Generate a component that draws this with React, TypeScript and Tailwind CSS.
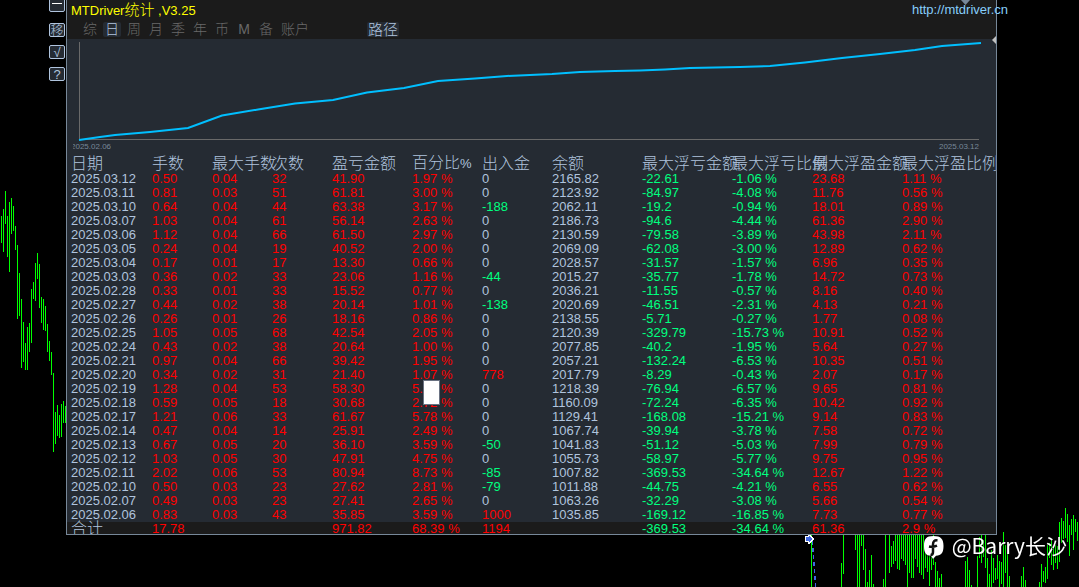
import clsx from "clsx";

type Bar = [x: number, top: number, bottom: number];

const bars: Bar[] = [
	[1, 216, 243], [3, 209, 252], [5, 191, 224], [7, 216, 257], [9, 202, 272],
	[11, 198, 234], [13, 206, 231], [15, 226, 250], [17, 245, 319], [19, 273, 316],
	[21, 299, 368], [23, 322, 362], [25, 343, 370], [27, 327, 370], [29, 323, 352],
	[31, 289, 343], [33, 282, 299], [35, 263, 301], [37, 253, 279], [39, 264, 308],
	[41, 297, 323], [43, 299, 330], [45, 306, 331], [47, 324, 352], [49, 341, 361],
	[51, 352, 375], [53, 373, 452], [55, 412, 444], [57, 405, 436], [59, 415, 438],
	[61, 404, 437], [63, 401, 423], [65, 406, 423],
	[811, 535, 587], [841, 563, 587], [843, 535, 574], [855, 535, 550], [857, 535, 587],
	[859, 535, 587], [861, 535, 546], [863, 535, 570], [865, 549, 587], [867, 582, 587],
	[869, 570, 587], [871, 555, 587], [873, 584, 587], [883, 579, 587], [885, 535, 587],
	[889, 535, 573], [891, 546, 567], [893, 541, 564], [895, 535, 561], [897, 535, 569],
	[899, 535, 570], [901, 535, 559], [903, 535, 561], [905, 535, 565], [907, 535, 587],
	[909, 535, 573], [911, 535, 578], [913, 535, 578], [915, 535, 559], [917, 535, 567],
	[919, 535, 573], [921, 535, 575], [923, 535, 579], [925, 540, 568], [927, 548, 572],
	[929, 550, 586], [931, 550, 570], [933, 535, 565], [935, 562, 587], [937, 571, 587],
	[939, 578, 587], [941, 574, 587], [965, 561, 587], [967, 557, 587], [969, 570, 587],
	[971, 585, 587], [977, 556, 587], [979, 537, 558], [981, 535, 563], [983, 540, 557],
	[985, 535, 568], [987, 558, 587], [989, 574, 587], [991, 550, 587], [993, 558, 583],
	[995, 568, 580], [997, 555, 579], [999, 561, 587], [1001, 562, 584], [1003, 532, 587],
	[1005, 545, 573], [1007, 553, 587], [1009, 576, 587], [1021, 576, 587], [1023, 567, 587],
	[1025, 580, 587], [1039, 582, 587], [1041, 564, 587], [1043, 571, 582], [1045, 567, 583],
	[1047, 545, 579], [1049, 543, 558], [1051, 540, 565], [1053, 548, 570], [1055, 545, 563],
	[1057, 546, 569], [1059, 522, 562], [1061, 518, 543], [1063, 521, 539], [1065, 508, 538],
	[1067, 514, 542], [1069, 525, 556], [1071, 519, 535], [1073, 515, 550], [1075, 519, 532],
	[1077, 522, 541],
];

const columns = [
	{ label: "日期", width: "w-[81px]" },
	{ label: "手数", width: "w-[60px]" },
	{ label: "最大手数", width: "w-[60px]" },
	{ label: "次数", width: "w-[60px]" },
	{ label: "盈亏金额", width: "w-[80px]" },
	{ label: "百分比%", width: "w-[70px]" },
	{ label: "出入金", width: "w-[70px]" },
	{ label: "余额", width: "w-[90px]" },
	{ label: "最大浮亏金额", width: "w-[90px]" },
	{ label: "最大浮亏比例", width: "w-[80px]" },
	{ label: "最大浮盈金额", width: "w-[90px]" },
	{ label: "最大浮盈比例", width: "w-auto" },
];

const rows = [
	["2025.03.12", "0.50", "0.04", "32", "41.90", "1.97 %", "0", "2165.82", "-22.61", "-1.06 %", "23.68", "1.11 %"],
	["2025.03.11", "0.81", "0.03", "51", "61.81", "3.00 %", "0", "2123.92", "-84.97", "-4.08 %", "11.76", "0.56 %"],
	["2025.03.10", "0.64", "0.04", "44", "63.38", "3.17 %", "-188", "2062.11", "-19.2", "-0.94 %", "18.01", "0.89 %"],
	["2025.03.07", "1.03", "0.04", "61", "56.14", "2.63 %", "0", "2186.73", "-94.6", "-4.44 %", "61.36", "2.90 %"],
	["2025.03.06", "1.12", "0.04", "66", "61.50", "2.97 %", "0", "2130.59", "-79.58", "-3.89 %", "43.98", "2.11 %"],
	["2025.03.05", "0.24", "0.04", "19", "40.52", "2.00 %", "0", "2069.09", "-62.08", "-3.00 %", "12.89", "0.62 %"],
	["2025.03.04", "0.17", "0.01", "17", "13.30", "0.66 %", "0", "2028.57", "-31.57", "-1.57 %", "6.96", "0.35 %"],
	["2025.03.03", "0.36", "0.02", "33", "23.06", "1.16 %", "-44", "2015.27", "-35.77", "-1.78 %", "14.72", "0.73 %"],
	["2025.02.28", "0.33", "0.01", "33", "15.52", "0.77 %", "0", "2036.21", "-11.55", "-0.57 %", "8.16", "0.40 %"],
	["2025.02.27", "0.44", "0.02", "38", "20.14", "1.01 %", "-138", "2020.69", "-46.51", "-2.31 %", "4.13", "0.21 %"],
	["2025.02.26", "0.26", "0.01", "26", "18.16", "0.86 %", "0", "2138.55", "-5.71", "-0.27 %", "1.77", "0.08 %"],
	["2025.02.25", "1.05", "0.05", "68", "42.54", "2.05 %", "0", "2120.39", "-329.79", "-15.73 %", "10.91", "0.52 %"],
	["2025.02.24", "0.43", "0.02", "38", "20.64", "1.00 %", "0", "2077.85", "-40.2", "-1.95 %", "5.64", "0.27 %"],
	["2025.02.21", "0.97", "0.04", "66", "39.42", "1.95 %", "0", "2057.21", "-132.24", "-6.53 %", "10.35", "0.51 %"],
	["2025.02.20", "0.34", "0.02", "31", "21.40", "1.07 %", "778", "2017.79", "-8.29", "-0.43 %", "2.07", "0.17 %"],
	["2025.02.19", "1.28", "0.04", "53", "58.30", "5.03 %", "0", "1218.39", "-76.94", "-6.57 %", "9.65", "0.81 %"],
	["2025.02.18", "0.59", "0.05", "18", "30.68", "2.72 %", "0", "1160.09", "-72.24", "-6.35 %", "10.42", "0.92 %"],
	["2025.02.17", "1.21", "0.06", "33", "61.67", "5.78 %", "0", "1129.41", "-168.08", "-15.21 %", "9.14", "0.83 %"],
	["2025.02.14", "0.47", "0.04", "14", "25.91", "2.49 %", "0", "1067.74", "-39.94", "-3.78 %", "7.58", "0.72 %"],
	["2025.02.13", "0.67", "0.05", "20", "36.10", "3.59 %", "-50", "1041.83", "-51.12", "-5.03 %", "7.99", "0.79 %"],
	["2025.02.12", "1.03", "0.05", "30", "47.91", "4.75 %", "0", "1055.73", "-58.97", "-5.77 %", "9.75", "0.95 %"],
	["2025.02.11", "2.02", "0.06", "53", "80.94", "8.73 %", "-85", "1007.82", "-369.53", "-34.64 %", "12.67", "1.22 %"],
	["2025.02.10", "0.50", "0.03", "23", "27.62", "2.81 %", "-79", "1011.88", "-44.75", "-4.21 %", "6.55", "0.62 %"],
	["2025.02.07", "0.49", "0.03", "23", "27.41", "2.65 %", "0", "1063.26", "-32.29", "-3.08 %", "5.66", "0.54 %"],
	["2025.02.06", "0.83", "0.03", "43", "35.85", "3.59 %", "1000", "1035.85", "-169.12", "-16.85 %", "7.73", "0.77 %"],
];

const totals = ["合计", "17.78", "", "", "971.82", "68.39 %", "1194", "", "-369.53", "-34.64 %", "61.36", "2.9 %"];

const periods = ["综", "日", "周", "月", "季", "年", "币", "M", "备"];

const cellColor = (value: string, column: number) => {
	if (column === 0 || column === 7 || value === "0") return "text-[#b0c4de]";
	return value.startsWith("-") ? "text-[#00ff7f]" : "text-[#ff0000]";
};

const PriceBars = () => (
	<svg
		className="absolute left-0 top-0"
		width="1079"
		height="587"
		shapeRendering="crispEdges"
		aria-hidden="true"
	>
		{bars.map(([x, top, bottom]) => (
			<rect key={x} x={x} y={top} width="1" height={bottom - top} fill="#00ff00" />
		))}
		<path d="M812.5 541L815.5 587" stroke="#4169e1" strokeWidth="1.5" strokeDasharray="4 3" />
		<path
			d="M805 536h3v-2h1v1h1v1h1v1h1v1h1v1h-1v1h-1v1h-1v1h-1v1h-1v-2h-3z"
			fill="#4169e1"
			stroke="#ffffff"
			strokeWidth="1"
		/>
	</svg>
);

const SideButtons = () => (
	<div className="flex w-[66px] shrink-0 flex-col items-end gap-2 pr-px text-[13px] leading-[13px] text-[#b0c4de]">
		<button
			aria-label="最小化"
			className="-mt-1 flex h-4 w-4 justify-center rounded-xs border border-[#b0c4de] bg-[#252b33] pt-1.5"
		>
			<span className="h-px w-2.5 bg-white" />
		</button>
		<button className="mt-[3px] h-3.5 w-4 overflow-hidden rounded-xs border border-[#b0c4de] bg-[#252b33] font-light">
			移
		</button>
		<button className="h-3.5 w-4 overflow-hidden rounded-xs border border-[#b0c4de] bg-[#252b33]">
			√
		</button>
		<button className="h-3.5 w-4 overflow-hidden rounded-xs border border-[#b0c4de] bg-[#252b33]">
			?
		</button>
	</div>
);

const Header = () => (
	<header className="h-[39px] bg-[#1b1b1b]">
		<div className="flex h-[22px] justify-between pl-1 leading-[20px]">
			<h1 className="whitespace-pre text-[13px] text-[#ffff00]">
				MTDriver<span className="text-[15px] font-light">统计</span>
				{" ,V3.25"}
			</h1>
			<a href="http://mtdriver.cn" className="-mr-3 text-[13px] text-[#87cefa]">
				http://mtdriver.cn
			</a>
		</div>
		<nav className="flex gap-1 pl-3.5 text-sm/[15px] font-light text-[#696969]">
			{periods.map((period) => (
				<button
					key={period}
					className={clsx(
						"h-[15px] w-[18px] overflow-hidden rounded-xs",
						period === "日" && "bg-[#252b33] text-[#b0c4de]",
						period === "M" && "font-normal",
					)}
				>
					{period}
				</button>
			))}
			<button className="h-[15px] w-8 overflow-hidden">账户</button>
			<button className="ml-[52px] h-[15px] w-8 overflow-hidden rounded-xs bg-[#252b33] text-[15px] leading-[15px] text-[#b0c4de]">
				路径
			</button>
		</nav>
	</header>
);

const EquityChart = () => (
	<section className="h-[116px]">
		<svg className="block h-[102px] w-full" viewBox="67 39 929 102" preserveAspectRatio="none">
			<path
				d="M79.5 42V139.5H979"
				fill="none"
				stroke="#696969"
				shapeRendering="crispEdges"
			/>
			<polyline
				points="79,140 100,137 115,135 150,132 188,128 222,115.5 258,109.5 295,103.5 333,100 367,92.5 404,88 438,81 475,78.5 507,76 552,74 580,72 615,71 640,70.5 665,69.5 690,68 740,67 770,66 805,62.5 842,58 880,54 915,50 942,46 981,43"
				fill="none"
				stroke="#00bfff"
				strokeWidth="2"
			/>
		</svg>
		<div className="flex justify-between pl-1.5 pr-[17px] text-[8px] leading-[11px] text-[#778899]">
			<span className="overflow-hidden -indent-0.5">2025.02.06</span>
			<span>2025.03.12</span>
		</div>
	</section>
);

const StatsTable = () => (
	<div className="relative h-[379px] overflow-hidden">
		<table className="w-full table-fixed border-collapse whitespace-nowrap text-left text-[13px]">
			<thead>
				<tr className="text-base/[16px] text-[#b0c4de]">
					{columns.map(({ label, width }) => (
						<th key={label} className={clsx("p-0 pl-1 font-light", width)}>
							{label.replace("%", "")}
							{label.endsWith("%") && <span className="text-[13px] font-normal">%</span>}
						</th>
					))}
				</tr>
			</thead>
			<tbody className="leading-[14px]">
				{rows.map((row) => (
					<tr key={row[0]}>
						{row.map((value, i) => (
							<td key={i} className={clsx("p-0 pl-1", cellColor(value, i))}>
								{value}
							</td>
						))}
					</tr>
				))}
			</tbody>
			<tfoot className="bg-[#1b1b1b] leading-[13px]">
				<tr>
					{totals.map((value, i) => (
						<td
							key={i}
							className={clsx("p-0 pl-1", i === 0 && "text-base/[13px] font-light", cellColor(value, i))}
						>
							{value}
						</td>
					))}
				</tr>
			</tfoot>
		</table>
		<div className="absolute left-[356px] top-[225px] h-[25px] w-[17px] border border-gray-500 bg-white" />
	</div>
);

export default function App() {
	return (
		<div className="relative min-h-screen overflow-hidden bg-black font-['Liberation_Sans','Noto_Sans_CJK_SC',sans-serif]">
			<PriceBars />
			<div className="relative flex items-start">
				<SideButtons />
				<main className="relative mr-[82px] min-w-0 flex-1 border-x border-b border-[#778899] bg-[#252b33]">
					<Header />
					<EquityChart />
					<StatsTable />
					<svg className="absolute right-[26px] top-0" width="9" height="5" aria-hidden="true">
						<path d="M0 0H9L4.5 5Z" fill="#778899" />
					</svg>
					<svg className="absolute right-0 top-9" width="4" height="8" aria-hidden="true">
						<path d="M4 0V8L0 4Z" fill="#c0c0c0" />
					</svg>
				</main>
			</div>
			<div className="absolute bottom-7 right-3 flex items-center gap-2 text-white drop-shadow-[0_1px_1px_rgba(0,0,0,0.8)]">
				<svg className="mt-1" width="21" height="24" viewBox="0 0 21 24" aria-hidden="true">
					<path
						d="M10.500 1C3 1 1 4 1 11s2 9.500 7 9.800L10 24l3-3.200c5.500-.4 7.500-3 7.500-9.800S18 1 10.500 1z"
						fill="#ffffff"
					/>
					<path
						d="M14.500 5.500c-3-.6-4.500.8-4.500 4V17c0 2-1 3-2.500 3M6 11.500c3 .8 5 .5 8-.8"
						fill="none"
						stroke="#111111"
						strokeWidth="2.500"
					/>
				</svg>
				<span className="font-['Noto_Sans_CJK_SC',sans-serif] text-[21px] leading-6">@Barry长沙</span>
			</div>
		</div>
	);
}
